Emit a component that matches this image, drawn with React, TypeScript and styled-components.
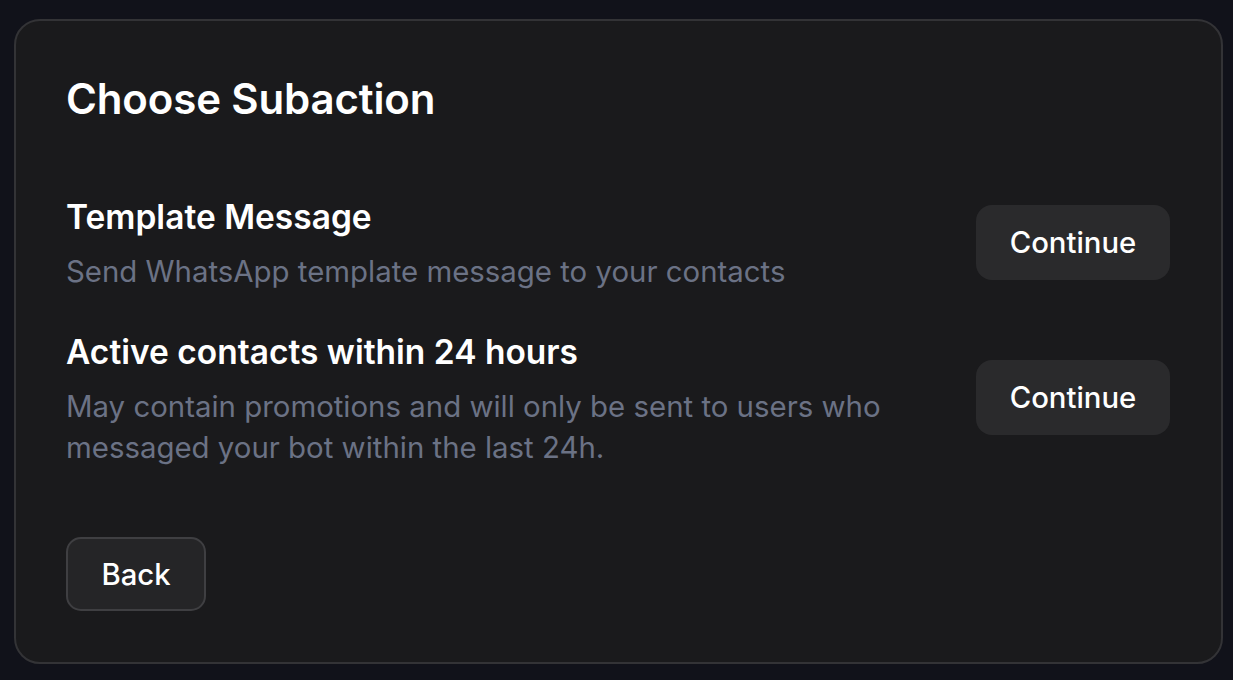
import React from "react";
import styled, { createGlobalStyle } from "styled-components";

const Global = createGlobalStyle`
  html, body { margin: 0; padding: 0; background: #11121a; }
  body { font-family: Inter, "Noto Sans", sans-serif; -webkit-font-smoothing: antialiased; }
  * { box-sizing: border-box; }
`;

const Page = styled.div`
  padding: 19px 10px 16px 14px;
  min-height: 680px;
`;

const Card = styled.div`
  background: #1a1a1c;
  border: 2px solid #333336;
  border-radius: 26px;
  padding: 53px 51px 51px 50px;
  display: flex;
  flex-direction: column;
  height: 645px;
`;

const Title = styled.h1`
  margin: 0;
  color: #ffffff;
  font-size: 42px;
  font-weight: 600;
  line-height: 50px;
  letter-spacing: -0.15px;
`;

const List = styled.div`
  display: flex;
  flex-direction: column;
  gap: 40px;
  margin-top: 73px;
`;

const Row = styled.div`
  display: flex;
  align-items: center;
  justify-content: space-between;
  gap: 24px;
`;

const Info = styled.div`
  display: flex;
  flex-direction: column;
  gap: 14px;
  max-width: 860px;
`;

const ItemTitle = styled.div`
  color: #ffffff;
  font-size: 33.5px;
  font-weight: 600;
  line-height: 40px;
`;

const Desc = styled.div`
  color: #6b7285;
  font-size: 29.4px;
  line-height: 41px;
  font-weight: 400;
`;

const ContinueButton = styled.button`
  flex: none;
  width: 194px;
  height: 75px;
  margin-top: -5px;
  border: none;
  border-radius: 16px;
  background: #2a2a2c;
  color: #ffffff;
  font-family: inherit;
  font-size: 29.3px;
  font-weight: 500;
  cursor: pointer;
`;

const Footer = styled.div`
  margin-top: auto;
  display: flex;
`;

const BackButton = styled.button`
  width: 140px;
  height: 74px;
  border: 2px solid #3f3f42;
  border-radius: 15px;
  background: #252527;
  color: #ffffff;
  font-family: inherit;
  font-size: 29.3px;
  font-weight: 500;
  cursor: pointer;
`;

const items = [
  {
    title: "Template Message",
    desc: "Send WhatsApp template message to your contacts",
  },
  {
    title: "Active contacts within 24 hours",
    desc: "May contain promotions and will only be sent to users who messaged your bot within the last 24h.",
  },
];

export default function App() {
  return (
    <>
      <Global />
      <Page>
        <Card>
          <Title>Choose Subaction</Title>
          <List>
            {items.map((it) => (
              <Row key={it.title}>
                <Info>
                  <ItemTitle>{it.title}</ItemTitle>
                  <Desc>{it.desc}</Desc>
                </Info>
                <ContinueButton>Continue</ContinueButton>
              </Row>
            ))}
          </List>
          <Footer>
            <BackButton>Back</BackButton>
          </Footer>
        </Card>
      </Page>
    </>
  );
}
